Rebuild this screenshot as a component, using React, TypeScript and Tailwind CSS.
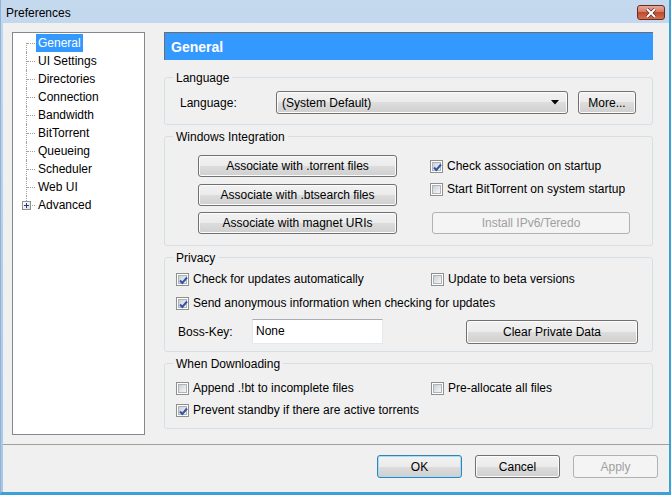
import React from 'react'

const btn =
  'flex items-center justify-center rounded-[3px] border border-[#707070] bg-[linear-gradient(to_bottom,#f2f2f2_0%,#ebebeb_50%,#dddddd_50%,#cfcfcf_100%)] shadow-[inset_0_0_0_1px_#fcfcfc] text-black'
const btnOff =
  'flex items-center justify-center rounded-[3px] border border-[#adb2b5] bg-[#f4f4f4] text-[#a0a0a0]'

const CheckBox = ({ checked, label }: { checked?: boolean; label: string }) => (
  <div className="flex items-center h-[16px] gap-[4px] whitespace-nowrap">
    <span className="relative w-[13px] h-[13px] border border-[#8e8f8f] bg-white p-[1px] shrink-0">
      <span className="block w-[9px] h-[9px] border border-[#aeb3b9] bg-[linear-gradient(135deg,#cbcfd5,#f6f6f6)]" />
      {checked && (
        <svg className="absolute left-[1px] top-[1px]" width="11" height="11" viewBox="0 0 11 11">
          <path d="M2 5.5 L4.3 8 L9 2.5" fill="none" stroke="#3553a6" strokeWidth="2" />
        </svg>
      )}
    </span>
    <span>{label}</span>
  </div>
)

const Group = ({ title, className, children }: { title: string; className: string; children?: React.ReactNode }) => (
  <div className={`border border-[#d5dfe5] rounded-[3px] ${className}`}>
    <div className="-mt-[8px] ml-[8px] w-fit px-[3px] bg-[#f0f0f0] leading-[16px] h-[16px]">{title}</div>
    {children}
  </div>
)

const treeItems = ['General', 'UI Settings', 'Directories', 'Connection', 'Bandwidth', 'BitTorrent', 'Queueing', 'Scheduler', 'Web UI', 'Advanced']

const App = () => {
  return (
    <div className="w-[671px] h-[495px] flex flex-col bg-[linear-gradient(to_bottom,#c4d8ee,#a9c6e6)] border-l border-l-[#8fb2d8] border-r-2 border-b-[3px] border-[#3aa2d6] font-['Liberation_Sans',Arial,sans-serif] text-[12px] text-black leading-[16px]">
      {/* title bar */}
      <div className="h-[23px] flex items-start shrink-0">
        <span className="ml-[5px] mt-[5px]">Preferences</span>
        <button className="ml-auto mr-[4px] mt-[5px] w-[28px] h-[15px] rounded-[3px] border border-[#6b2b1f] bg-[linear-gradient(to_bottom,#e8a898_0%,#d37760_50%,#c04a2e_50%,#d0714f_100%)] flex items-center justify-center">
          <svg width="12" height="10" viewBox="0 0 12 10">
            <path d="M2 1 L10 9 M10 1 L2 9" stroke="#5a2a20" strokeWidth="3.4" />
            <path d="M2 1 L10 9 M10 1 L2 9" stroke="#ffffff" strokeWidth="2" />
          </svg>
        </button>
      </div>

      <div className="flex-1 bg-[#f0f0f0] ml-[2px] flex flex-col">
        <div className="flex h-[421px]">
          {/* tree */}
          <div className="ml-[9px] mt-[9px] w-[133px] h-[403px] border border-[#828790] bg-white pt-[1px]">
            {treeItems.map((t, i) => (
              <div key={t} className="flex items-center h-[18px]">
                <div className="relative w-[23px] h-[18px] shrink-0">
                  <span
                    className={`absolute left-[13px] border-l border-dotted border-[#a0a0a0] ${
                      i === 0 ? 'top-[9px] bottom-0' : i === treeItems.length - 1 ? 'top-0 h-[9px]' : 'top-0 bottom-0'
                    }`}
                  />
                  <span className="absolute left-[14px] top-[9px] w-[8px] border-t border-dotted border-[#a0a0a0]" />
                  {i === treeItems.length - 1 && (
                    <span className="absolute left-[9px] top-[5px] w-[9px] h-[9px] border border-[#919191] bg-[linear-gradient(135deg,#ffffff,#dcdcdc)] flex items-center justify-center">
                      <svg width="7" height="7" viewBox="0 0 7 7">
                        <path d="M1 3.5 H6 M3.5 1 V6" stroke="#1f3f7a" strokeWidth="1" />
                      </svg>
                    </span>
                  )}
                </div>
                <span className={`h-[18px] flex items-center px-[2px] ${i === 0 ? 'bg-[#3399ff] text-white' : ''}`}>{t}</span>
              </div>
            ))}
          </div>

          {/* right panel */}
          <div className="ml-[19px] mt-[9px] w-[489px] flex flex-col">
            <div className="h-[28px] bg-[#3399ff] border-t border-l border-[#6d6d6d] flex items-center pl-[6px] text-white font-bold text-[14px]">
              General
            </div>

            <Group title="Language" className="mt-[17px] h-[48px]">
              <div className="mt-[5px] flex items-center pl-[15px]">
                <span className="w-[96px]">Language:</span>
                <div className={`${btn} w-[292px] h-[23px] !justify-between px-[5px]`}>
                  <span>(System Default)</span>
                  <svg width="8" height="5" viewBox="0 0 8 5" className="mr-[3px]">
                    <path d="M0 0 H8 L4 4.5 Z" fill="#000" />
                  </svg>
                </div>
                <div className={`${btn} ml-[10px] w-[58px] h-[23px]`}>More...</div>
              </div>
            </Group>

            <Group title="Windows Integration" className="mt-[11px] h-[110px]">
              <div className="flex">
                <div className="w-[265px] pl-[33px] pt-[10px] flex flex-col">
                  <div className={`${btn} w-[199px] h-[22px]`}>Associate with .torrent files</div>
                  <div className={`${btn} w-[199px] h-[22px] mt-[7px]`}>Associate with .btsearch files</div>
                  <div className={`${btn} w-[199px] h-[22px] mt-[6px]`}>Associate with magnet URIs</div>
                </div>
                <div className="pt-[13px] flex flex-col">
                  <CheckBox checked label="Check association on startup" />
                  <div className="mt-[7px]">
                    <CheckBox label="Start BitTorrent on system startup" />
                  </div>
                  <div className={`${btnOff} ml-[2px] mt-[15px] w-[198px] h-[22px]`}>Install IPv6/Teredo</div>
                </div>
              </div>
            </Group>

            <Group title="Privacy" className="mt-[11px] h-[95px]">
              <div className="mt-[5px] pl-[11px] flex">
                <div className="w-[255px]">
                  <CheckBox checked label="Check for updates automatically" />
                </div>
                <CheckBox label="Update to beta versions" />
              </div>
              <div className="mt-[8px] pl-[11px]">
                <CheckBox checked label="Send anonymous information when checking for updates" />
              </div>
              <div className="mt-[8px] flex items-center h-[25px]">
                <span className="w-[87px] pl-[13px]">Boss-Key:</span>
                <div className="w-[131px] h-[25px] bg-white border border-[#e3e9ef] border-t-[#abadb3] pl-[3px] pt-[3px]">None</div>
                <div className={`${btn} ml-[83px] w-[172px] h-[24px]`}>Clear Private Data</div>
              </div>
            </Group>

            <Group title="When Downloading" className="mt-[11px] h-[66px]">
              <div className="mt-[8px] pl-[11px] flex">
                <div className="w-[255px]">
                  <CheckBox label="Append .!bt to incomplete files" />
                </div>
                <CheckBox label="Pre-allocate all files" />
              </div>
              <div className="mt-[6px] pl-[11px]">
                <CheckBox checked label="Prevent standby if there are active torrents" />
              </div>
            </Group>
          </div>
        </div>

        {/* bottom bar */}
        <div className="border-t border-[#a0a0a0] flex justify-end gap-[13px] pt-[10px] pr-[11px]">
          <div className={`${btn} w-[85px] h-[23px] !border-[#3c7fb1] !shadow-[inset_0_0_0_1px_#9fe0fb]`}>OK</div>
          <div className={`${btn} w-[85px] h-[23px]`}>Cancel</div>
          <div className={`${btnOff} w-[85px] h-[23px]`}>Apply</div>
        </div>
      </div>
    </div>
  )
}

export default App
